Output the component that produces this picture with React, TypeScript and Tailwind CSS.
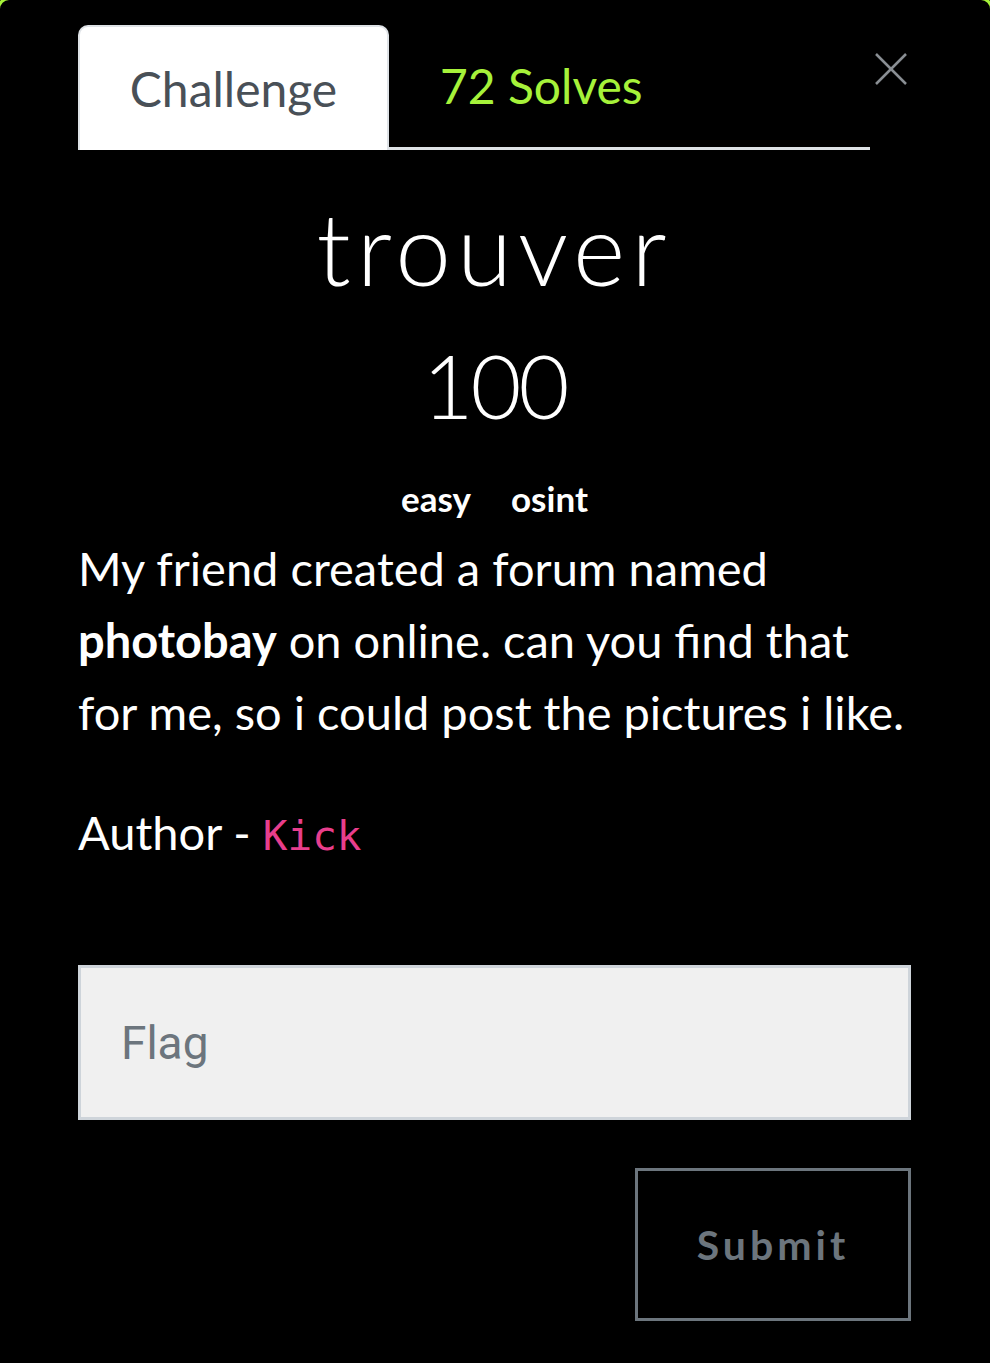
import React, { useState } from "react";

export default function App() {
  const [flag, setFlag] = useState("");

  return (
    <div className="min-h-[1363px] w-[990px] overflow-hidden bg-black" style={{ fontFamily: "Lato, 'Open Sans', sans-serif" }}>
      <div className="relative -mx-[3px] -mt-[3px] min-h-[1380px] rounded-[12px] border-[3px] border-[#a6f23a] bg-black">
        {/* close */}
        <button className="absolute right-[82px] top-[52px] h-[34px] w-[34px]">
          <svg viewBox="0 0 34 34" className="h-full w-full" fill="none" stroke="#8a8f94" strokeWidth="2.5">
            <path d="M2 2 L32 32" />
            <path d="M32 2 L2 32" />
          </svg>
        </button>

        <div className="pl-[78px] pr-[79px] pt-[25px]">
          {/* tabs */}
          <div className="flex h-[125px] w-[792px] items-stretch border-b-[3px] border-[#dee2e6]">
            <div className="-mb-[3px] flex w-[311px] items-center justify-center rounded-t-[10px] border-2 border-b-0 border-[#dee2e6] bg-white text-[48px] text-[#495057]">
              Challenge
            </div>
            <div className="flex items-center pl-[51px] text-[48px] text-[#a6f23a]">72 Solves</div>
          </div>

          {/* title */}
          <h2 className="mt-[47px] text-center text-[100px] font-light leading-none tracking-[6px] text-white">trouver</h2>
          <h3 className="mt-[44px] text-center text-[88px] font-light leading-none tracking-[-3px] text-white">100</h3>

          <div className="mt-[52px] flex justify-center gap-[40px] text-[35px] font-bold leading-none text-white">
            <span>easy</span>
            <span>osint</span>
          </div>

          <div className="mt-[16px] text-[47px] leading-[72px] text-white">
            <p>
              My friend created a forum named <b>photobay</b> on online. can you find that for me, so i could post the pictures i like.
            </p>
            <p className="mt-[48px]">
              Author - <code className="text-[41px] text-[#e83e8c]" style={{ fontFamily: "'DejaVu Sans Mono', 'Liberation Mono', monospace" }}>Kick</code>
            </p>
          </div>

          <input
            value={flag}
            onChange={(e) => setFlag(e.target.value)}
            placeholder="Flag"
            className="mt-[93px] block h-[155px] w-full border-[3px] border-[#ced4da] bg-[#f0f0f0] px-[40px] text-[46px] text-[#495057] outline-none placeholder:text-[#6c757d]"
            style={{ fontFamily: "Roboto, sans-serif" }}
          />

          <div className="mt-[48px] flex justify-end">
            <button className="h-[153px] w-[276px] border-[3px] border-[#6c757d] text-[41px] font-bold tracking-[4px] text-[#6c757d]">
              Submit
            </button>
          </div>
        </div>
      </div>
    </div>
  );
}
